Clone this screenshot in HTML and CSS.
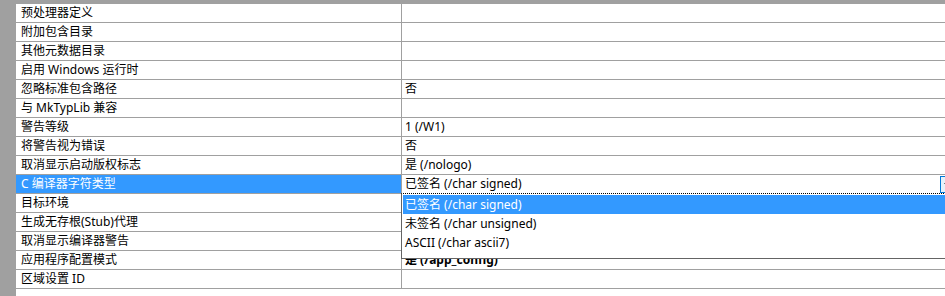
FILE: index.html
```html
<!DOCTYPE html>
<html lang="zh-CN">
<head>
<meta charset="utf-8">
<title>属性</title>
<link rel="stylesheet" href="styles.css">
</head>
<body>
<div class="page">
  <div class="gutter"></div>
  <div class="main">
    <div class="topbar"></div>
    <div class="grid">
      <div class="row"><div class="name">预处理器定义</div><div class="value"></div></div>
      <div class="row"><div class="name">附加包含目录</div><div class="value"></div></div>
      <div class="row"><div class="name">其他元数据目录</div><div class="value"></div></div>
      <div class="row"><div class="name">启用 Windows 运行时</div><div class="value"></div></div>
      <div class="row"><div class="name">忽略标准包含路径</div><div class="value">否</div></div>
      <div class="row"><div class="name">与 MkTypLib 兼容</div><div class="value"></div></div>
      <div class="row"><div class="name">警告等级</div><div class="value">1 (/W1)</div></div>
      <div class="row"><div class="name">将警告视为错误</div><div class="value">否</div></div>
      <div class="row"><div class="name">取消显示启动版权标志</div><div class="value">是 (/nologo)</div></div>
      <div class="row selected">
        <div class="name">C 编译器字符类型</div>
        <div class="value editing">
          <span class="edit-text">已签名 (/char signed)</span>
          <span class="drop-btn"><svg class="arrow" width="8" height="4" viewBox="0 0 8 4"><path d="M0 0 L8 0 L4 4 Z" fill="#000"/></svg></span>
          <div class="dropdown">
            <div class="item active">已签名 (/char signed)</div>
            <div class="item">未签名 (/char unsigned)</div>
            <div class="item">ASCII (/char ascii7)</div>
          </div>
        </div>
      </div>
      <div class="row"><div class="name">目标环境</div><div class="value"></div></div>
      <div class="row"><div class="name">生成无存根(Stub)代理</div><div class="value"></div></div>
      <div class="row"><div class="name">取消显示编译器警告</div><div class="value"></div></div>
      <div class="row"><div class="name">应用程序配置模式</div><div class="value bold">是 (/app_config)</div></div>
      <div class="row last"><div class="name">区域设置 ID</div><div class="value"></div></div>
    </div>
  </div>
</div>
</body>
</html>
```

FILE: styles.css
```css
html, body {
  margin: 0;
  padding: 0;
  background: #ffffff;
}

body {
  font-family: "Noto Sans", "Noto Sans CJK SC", "Liberation Sans", sans-serif;
  font-size: 12px;
  color: #000000;
  overflow: hidden;
}

.page {
  display: flex;
  width: 945px;
  height: 296px;
  overflow: hidden;
}

.gutter {
  width: 16px;
  flex: 0 0 16px;
  background: #a0a0a0;
}

.main {
  flex: 1;
  display: flex;
  flex-direction: column;
  min-width: 0;
}

.topbar {
  height: 3px;
  background: #a0a0a0;
}

.grid {
  display: flex;
  flex-direction: column;
  border-bottom: 1px solid #a0a0a0;
}

.row {
  display: grid;
  grid-template-columns: 385px 1fr;
  height: 18px;
  border-top: 1px solid #a0a0a0;
}

.name {
  padding-left: 5px;
  line-height: 18px;
  white-space: nowrap;
  overflow: hidden;
}

.value {
  border-left: 1px solid #a0a0a0;
  padding-left: 3px;
  line-height: 18px;
  white-space: nowrap;
  position: relative;
}

.value.bold {
  font-weight: bold;
}

.row.selected .name {
  background: #3399ff;
  color: #ffffff;
}

.value.editing {
  background: #ffffff;
  display: flex;
  align-items: center;
}

.edit-text {
  flex: 1;
  line-height: 18px;
}

.drop-btn {
  position: absolute;
  left: 538px;
  top: 1px;
  width: 16px;
  height: 17px;
  border: 1px solid #0078d7;
  background: #e5f1fb;
  box-sizing: border-box;
}

.arrow {
  position: absolute;
  left: 3px;
  top: 6px;
}

.dropdown {
  position: absolute;
  left: -1px;
  top: 18px;
  width: 560px;
  height: 63px;
  background: #ffffff;
  border-left: 1px solid #646464;
  border-top: 1px dotted #000000;
  border-bottom: 1px solid #646464;
  padding-top: 1px;
  box-sizing: content-box;
  z-index: 2;
}

.item {
  height: 19px;
  line-height: 19px;
  padding-left: 2px;
  margin-left: 1px;
  white-space: nowrap;
}

.item.active {
  background: #3399ff;
  color: #ffffff;
}
```
